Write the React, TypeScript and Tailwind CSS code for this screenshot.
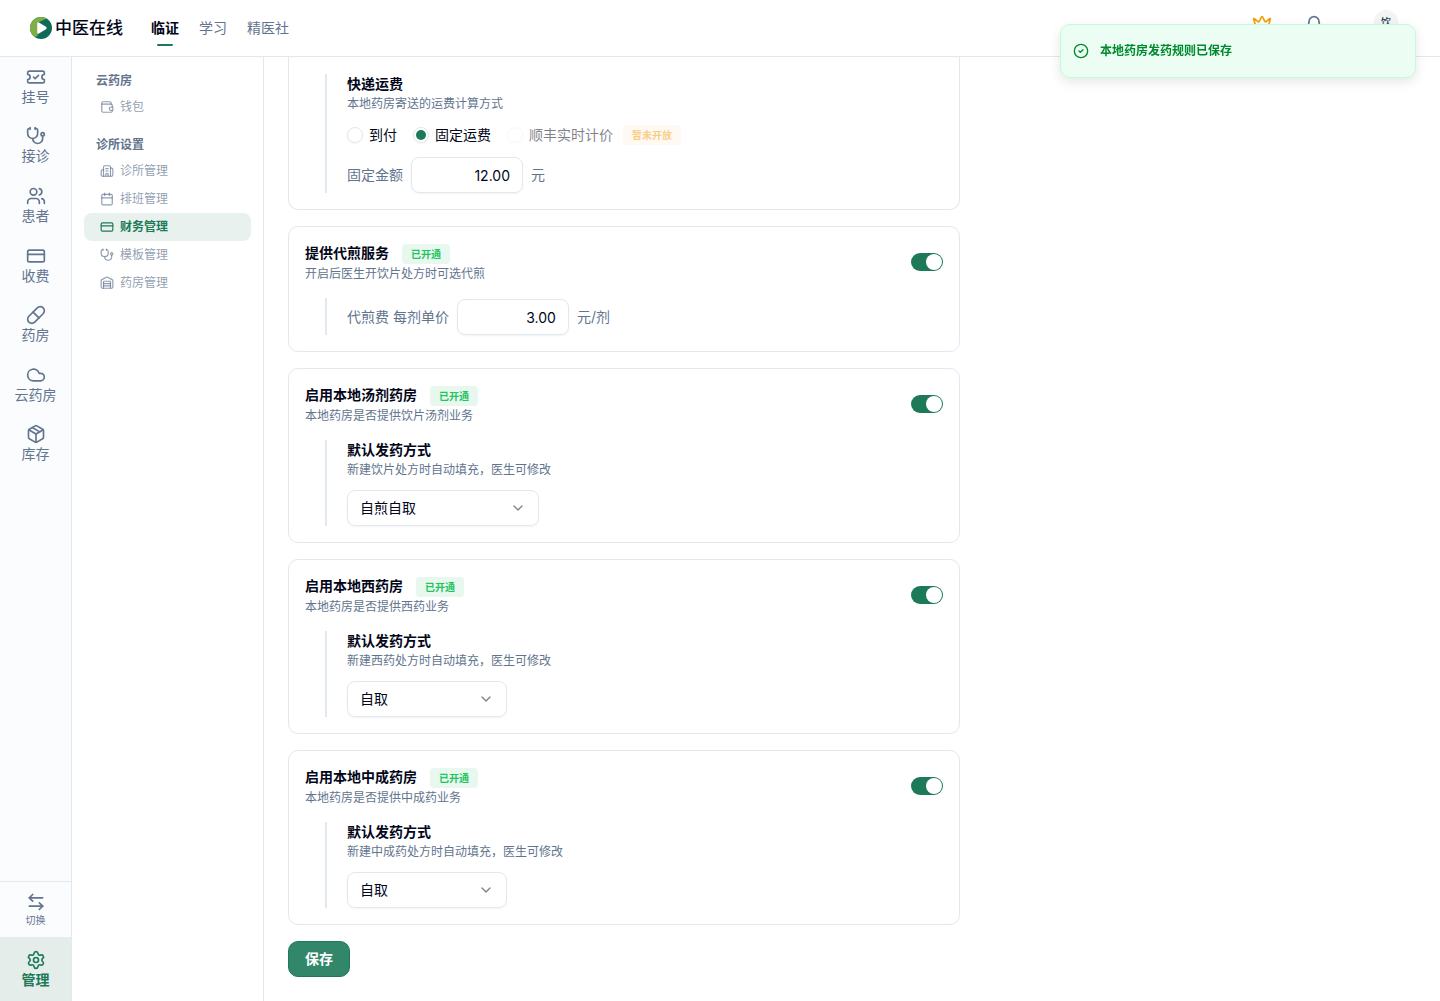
import React, { FC, ReactNode } from 'react';
import {
	ArrowLeftRight,
	Bell,
	Building2,
	Calendar,
	ChevronDown,
	CircleCheck,
	Cloud,
	CreditCard,
	Crown,
	LucideIcon,
	Package,
	Pill,
	Settings,
	Stethoscope,
	TicketCheck,
	Users,
	Warehouse,
} from 'lucide-react';

interface NavItem {
	label: string;
	icon: LucideIcon | FC<{ className?: string }>;
	active?: boolean;
}

const railItems: NavItem[] = [
	{ label: '挂号', icon: TicketCheck },
	{ label: '接诊', icon: Stethoscope },
	{ label: '患者', icon: Users },
	{ label: '收费', icon: CreditCard },
	{ label: '药房', icon: Pill },
	{ label: '云药房', icon: Cloud },
	{ label: '库存', icon: Package },
];

// wallet with an open flap and a round clasp
const WalletIcon: FC<{ className?: string }> = ({ className }) => (
	<svg
		className={className}
		viewBox="0 0 24 24"
		fill="none"
		stroke="currentColor"
		strokeWidth={2}
		strokeLinecap="round"
		strokeLinejoin="round"
	>
		<path d="M21 12V9a2 2 0 0 0-2-2H3" />
		<path d="M19 7V5a2 2 0 0 0-2-2H5a2 2 0 0 0-2 2v14a2 2 0 0 0 2 2h14a2 2 0 0 0 2-2v-1" />
		<path d="M22 12h-3a3 3 0 0 0 0 6h3z" />
	</svg>
);

const menuGroups: { title: string; items: NavItem[] }[] = [
	{
		title: '云药房',
		items: [{ label: '钱包', icon: WalletIcon }],
	},
	{
		title: '诊所设置',
		items: [
			{ label: '诊所管理', icon: Building2 },
			{ label: '排班管理', icon: Calendar },
			{ label: '财务管理', icon: CreditCard, active: true },
			{ label: '模板管理', icon: Stethoscope },
			{ label: '药房管理', icon: Warehouse },
		],
	},
];

const Logo: FC = () => (
	<svg className="size-[22px]" viewBox="0 0 22 22" aria-hidden="true">
		<circle cx="11" cy="11" r="11" fill="#0f6b57" />
		<path
			d="M11 0A11 11 0 0 0 4.8 20.1C7.6 19.6 8.4 18 7.6 16.4V7C8.4 4.6 12 4 16.6 1.500A11 11 0 0 0 11 0Z"
			fill="#7fae45"
		/>
		<path
			d="M7.200 6.400Q7.200 4.600 8.900 5.400L16 9.700Q17.600 11 16 12.200L8.900 16.500Q7.200 17.400 7.200 15.600Z"
			fill="#fff"
		/>
	</svg>
);

const Header: FC = () => (
	<header className="flex h-[57px] shrink-0 items-center border-b border-slate-200 bg-white pl-[30px] pr-[42px]">
		<a href="#" className="flex items-center gap-[3px]">
			<Logo />
			<span className="text-[17px] font-medium leading-6">中医在线</span>
		</a>
		<nav className="ml-7 flex h-full items-center gap-5 text-sm text-slate-500">
			<a
				href="#"
				className="relative flex h-full items-center font-semibold text-slate-950 after:absolute after:bottom-2.5 after:left-1/2 after:h-0.5 after:w-4 after:-translate-x-1/2 after:rounded-full after:bg-[#1c7a58]"
			>
				临证
			</a>
			<a href="#">学习</a>
			<a href="#">精医社</a>
		</nav>
		<div className="ml-auto flex h-full items-start pt-2.5">
			<button type="button" aria-label="会员" className="mr-8 pt-1">
				<Crown className="size-5 text-[#f59e0b]" />
			</button>
			<button type="button" aria-label="通知" className="mr-[50px] pt-[5px]">
				<Bell className="size-5 text-slate-500" />
			</button>
			<span className="flex size-6 items-center justify-center rounded-full bg-gray-100 text-[10px] font-medium text-slate-700">
				饮
			</span>
		</div>
	</header>
);

const Rail: FC = () => (
	<aside className="flex w-[72px] shrink-0 flex-col border-r border-slate-200 bg-[#fbfcfe] text-slate-500">
		<nav className="flex h-[417px] flex-col">
			{railItems.map(({ label, icon: Icon }) => (
				<a
					key={label}
					href="#"
					className="flex flex-1 flex-col items-center justify-center text-sm leading-5"
				>
					<Icon className="size-5" />
					{label}
				</a>
			))}
		</nav>
		<div className="mt-auto">
			<button
				type="button"
				className="flex h-14 w-full flex-col items-center justify-center border-t border-slate-200 text-[10px] leading-4"
			>
				<ArrowLeftRight className="size-5" />
				切换
			</button>
			<a
				href="#"
				className="flex h-16 flex-col items-center justify-center bg-[#e4edea] pt-0.5 text-sm font-semibold leading-5 text-[#1c7a58]"
			>
				<Settings className="size-5" />
				管理
			</a>
		</div>
	</aside>
);

const SubMenu: FC = () => (
	<aside className="flex w-48 shrink-0 flex-col gap-3 border-r border-slate-200 px-3 pt-3 text-xs">
		{menuGroups.map((group) => (
			<nav key={group.title}>
				<h2 className="px-3 font-semibold leading-6 text-slate-500">
					{group.title}
				</h2>
				{group.items.map(({ label, icon: Icon, active }) => (
					<a
						key={label}
						href="#"
						className={
							active
								? 'flex h-7 items-center gap-1.5 rounded-lg bg-[#e8f1ed] px-4 font-semibold text-[#1c7a58]'
								: 'flex h-7 items-center gap-1.5 rounded-lg px-4 text-slate-500/70'
						}
					>
						<Icon className="size-3.5" />
						{label}
					</a>
				))}
			</nav>
		))}
	</aside>
);

interface CardProps {
	title: string;
	desc: string;
	children: ReactNode;
}

const SwitchCard: FC<CardProps> = ({ title, desc, children }) => (
	<section className="rounded-[10px] border border-slate-200 p-4">
		<div className="flex items-start justify-between">
			<div>
				<div className="flex h-[21px] items-end gap-[13px]">
					<h3 className="pb-px text-sm font-semibold leading-5">{title}</h3>
					<span className="rounded bg-[#e8f8ee] px-[9px] text-[10px] font-semibold leading-5 text-[#22c55e]">
						已开通
					</span>
				</div>
				<p className="text-xs leading-5 text-slate-500">{desc}</p>
			</div>
			<input
				type="checkbox"
				role="switch"
				aria-label={title}
				defaultChecked
				className="mt-2.5 flex h-[18px] w-8 appearance-none items-center rounded-full bg-slate-300 px-px before:size-4 before:rounded-full before:bg-white checked:justify-end checked:bg-[#1c7a58]"
			/>
		</div>
		<div className="ml-5 mt-3.5 border-l-2 border-slate-200 pl-5">
			{children}
		</div>
	</section>
);

const SubTitle: FC<{ title: string; desc: string }> = ({ title, desc }) => (
	<>
		<h4 className="text-sm font-semibold leading-5">{title}</h4>
		<p className="text-xs leading-5 text-slate-500">{desc}</p>
	</>
);

const Amount: FC<{ label: string; value: string; unit: string }> = (props) => (
	<label className="flex items-center gap-2 text-sm text-slate-500">
		{props.label}
		<input
			type="text"
			inputMode="decimal"
			defaultValue={props.value}
			className="h-9 w-28 rounded-lg border border-slate-200 px-3 text-right text-slate-950 shadow-xs"
		/>
		{props.unit}
	</label>
);

const radioClass =
	'flex size-4 appearance-none items-center justify-center rounded-full border border-slate-200 shadow-xs before:size-2.5 before:rounded-full checked:before:bg-[#1c7a58] disabled:opacity-50';

const ShippingFee: FC = () => (
	<section className="rounded-b-[10px] border border-t-0 border-slate-200 px-4 pb-4 pt-[17px]">
		<div className="ml-5 border-l-2 border-slate-200 pl-5">
			<SubTitle title="快递运费" desc="本地药房寄送的运费计算方式" />
			<div className="mt-2.5 flex h-[21px] items-center gap-4 text-sm">
				<label className="flex items-center gap-1.5">
					<input type="radio" name="fee" className={radioClass} />
					到付
				</label>
				<label className="flex items-center gap-1.5">
					<input type="radio" name="fee" defaultChecked className={radioClass} />
					固定运费
				</label>
				<label className="flex items-center gap-1.5 opacity-50">
					<input type="radio" name="fee" disabled className={radioClass} />
					顺丰实时计价
					<span className="ml-1 rounded bg-[#fef5e7] px-[9px] text-[10px] font-bold leading-5 text-[#f59e0b]">
						暂未开放
					</span>
				</label>
			</div>
			<div className="mt-3">
				<Amount label="固定金额" value="12.00" unit="元" />
			</div>
		</div>
	</section>
);

const DispatchSelect: FC<{ kind: string; options: string[]; wide?: boolean }> = ({
	kind,
	options,
	wide,
}) => (
	<>
		<SubTitle
			title="默认发药方式"
			desc={`新建${kind}处方时自动填充，医生可修改`}
		/>
		<div className={wide ? 'relative mt-2.5 w-48' : 'relative mt-2.5 w-40'}>
			<select
				aria-label={`${kind}默认发药方式`}
				className="block h-9 w-full appearance-none rounded-lg border border-slate-200 px-3 text-sm shadow-xs"
			>
				{options.map((o) => (
					<option key={o}>{o}</option>
				))}
			</select>
			<ChevronDown className="pointer-events-none absolute right-[13px] top-2.5 size-4 opacity-50" />
		</div>
	</>
);

const Toast: FC = () => (
	<div
		role="status"
		className="fixed right-6 top-6 flex h-[54px] w-[356px] items-center gap-[11px] rounded-[10px] border border-[#bffcd9] bg-[#ecfdf3] px-3 text-xs font-semibold text-[#008a2e] shadow-[0_4px_12px_rgba(0,0,0,0.1)]"
	>
		<CircleCheck className="size-4" />
		本地药房发药规则已保存
	</div>
);

export default function App() {
	return (
		<div className="flex min-h-screen flex-col bg-white font-['Inter','Noto_Sans_CJK_SC',sans-serif] text-slate-950">
			<Header />
			<div className="flex flex-1">
				<Rail />
				<SubMenu />
				<main className="min-w-0 flex-1 px-6 pb-6">
					<form className="flex max-w-2xl flex-col gap-4">
						<ShippingFee />
						<SwitchCard title="提供代煎服务" desc="开启后医生开饮片处方时可选代煎">
							<div className="pt-px">
								<Amount label="代煎费 每剂单价" value="3.00" unit="元/剂" />
							</div>
						</SwitchCard>
						<SwitchCard title="启用本地汤剂药房" desc="本地药房是否提供饮片汤剂业务">
							<DispatchSelect kind="饮片" options={['自煎自取', '代煎自取']} wide />
						</SwitchCard>
						<SwitchCard title="启用本地西药房" desc="本地药房是否提供西药业务">
							<DispatchSelect kind="西药" options={['自取', '快递']} />
						</SwitchCard>
						<SwitchCard title="启用本地中成药房" desc="本地药房是否提供中成药业务">
							<DispatchSelect kind="中成药" options={['自取', '快递']} />
						</SwitchCard>
						<button
							type="button"
							className="h-9 self-start rounded-[10px] border border-[#1c7a58] bg-[#32876a] px-4 text-sm font-semibold text-white"
						>
							保存
						</button>
					</form>
				</main>
			</div>
			<Toast />
		</div>
	);
}
